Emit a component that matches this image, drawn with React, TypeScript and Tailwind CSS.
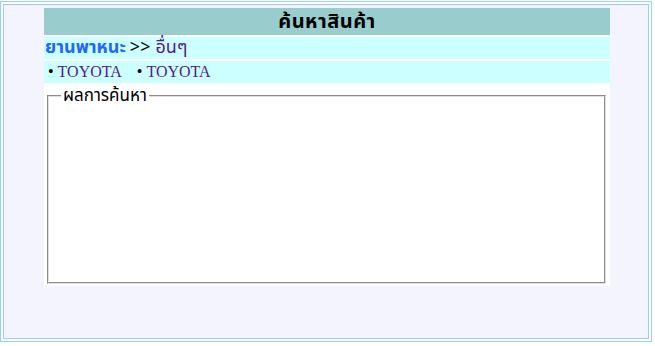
import React from "react";

const thai = { fontFamily: 'Tahoma, "Noto Sans Thai", "Noto Sans Thai UI", Loma, Garuda, "Noto Sans", sans-serif' };

export default function App() {
  return (
    <div className="w-[655px] h-[346px] bg-white pt-px overflow-hidden" style={thai}>
      <div className="w-[652px] h-[341px] border border-[#99ccff] p-[2px] bg-white">
        <div className="w-full h-full border border-[#99ccff] bg-[#f4f4fe] pt-[3px]">
          <div className="ml-[40px] w-[566px] bg-white flex flex-col gap-[2px]">
            <div className="h-[27px] bg-[#99cccc] flex items-center justify-center text-[20px] tracking-[0.5px] font-bold text-black leading-none">
              ค้นหาสินค้า
            </div>
            <div className="h-[22px] bg-[#ccffff] flex items-center pl-[1px] text-[18px] leading-none">
              <span className="font-bold text-[#2266ff]">ยานพาหนะ</span>
              <span className="text-black ml-[4px]">&gt;&gt;</span>
              <span className="text-[#551a8b] ml-[5px]">อื่นๆ</span>
            </div>
            <div
              className="h-[22px] bg-[#ccffff] flex items-center pl-[4px] text-[16px] leading-none"
              style={{ fontFamily: '"Liberation Serif", "Times New Roman", serif' }}
            >
              <span className="text-black">•</span>
              <span className="text-[#551a8b] ml-[4px]">TOYOTA</span>
              <span className="text-black ml-[15px]">•</span>
              <span className="text-[#551a8b] ml-[4px]">TOYOTA</span>
            </div>
            <div className="h-[201px] bg-white pt-[1px] pl-[3px] pr-[4px]">
              <fieldset className="h-[198px] border-2 [border-style:groove] border-[#e0e0e0] px-[12px] m-0">
                <legend className="px-[2px] text-[17px] leading-[20px] text-black">ผลการค้นหา</legend>
              </fieldset>
            </div>
          </div>
        </div>
      </div>
    </div>
  );
}
